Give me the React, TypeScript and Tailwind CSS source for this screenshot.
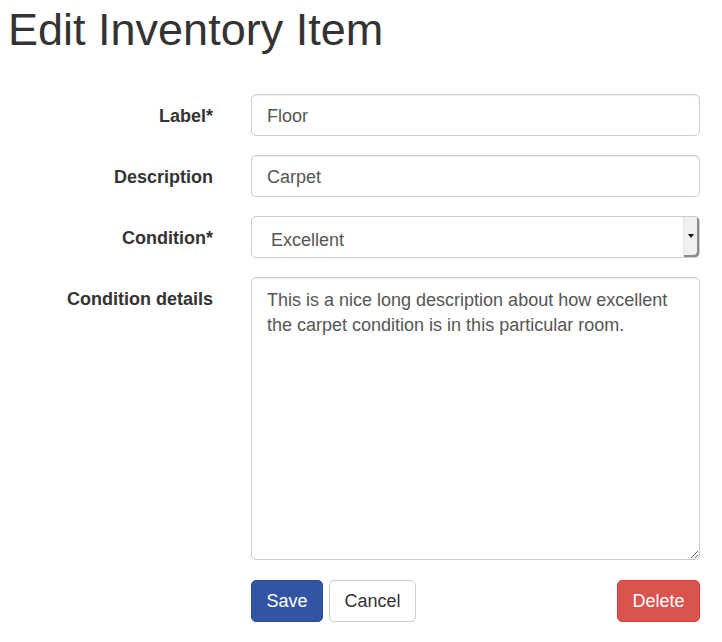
import React from 'react';

const fieldClass =
  'h-[42px] w-full rounded-[5px] border border-[#ccc] bg-white px-[15px] pt-[3px] text-[18px] text-[#555] outline-none shadow-[inset_0_1px_1px_rgba(0,0,0,0.075)]';

const FormRow: React.FC<{ label: string; children: React.ReactNode }> = ({ label, children }) => (
  <div className="flex">
    <label className="w-[213px] shrink-0 pt-[10px] text-right font-bold">{label}</label>
    <div className="ml-[38px] w-[449px]">{children}</div>
  </div>
);

const App: React.FC = () => {
  return (
    <div className="min-h-screen bg-white text-[18px] leading-[25px] text-[#333] font-['Liberation_Sans',Arial,sans-serif]">
      {/* Page title */}
      <h1 className="pl-[8px] pt-[5px] text-[45px] font-normal leading-[49.5px]">Edit Inventory Item</h1>

      {/* Form */}
      <form className="mt-[39.5px] flex flex-col gap-[19px]">
        <FormRow label="Label*">
          <input className={fieldClass} defaultValue="Floor" />
        </FormRow>

        <FormRow label="Description">
          <input className={fieldClass} defaultValue="Carpet" />
        </FormRow>

        <FormRow label="Condition*">
          <div className="flex h-[42px] w-full rounded-[5px] border border-[#ccc] bg-white">
            <span className="flex flex-1 items-center pl-[19px] pt-[7px] text-[#555]">Excellent</span>
            <div className="flex w-[16px] items-center justify-center self-stretch rounded-r-[4px] border-l border-[#e2e2e2] bg-[#eef0f2] shadow-[inset_-2px_-2px_0_#8c8c8c]">
              <span className="mb-[2px] mr-[2px] h-0 w-0 border-x-[3.5px] border-t-[4px] border-x-transparent border-t-[#111]" />
            </div>
          </div>
        </FormRow>

        <FormRow label="Condition details">
          <textarea
            className="block h-[283px] w-full rounded-[5px] border border-[#ccc] bg-white px-[15px] pb-[7.5px] pt-[9.5px] text-[18px] leading-[25px] text-[#555] outline-none shadow-[inset_0_1px_1px_rgba(0,0,0,0.075)]"
            defaultValue="This is a nice long description about how excellent the carpet condition is in this particular room."
          />
        </FormRow>

        {/* Actions */}
        <div className="mt-[1px] flex">
          <div className="ml-[251px] flex w-[449px] items-center">
            <button type="button" className="h-[42px] w-[72px] rounded-[5px] border border-[#2d4d96] bg-[#3254a4] pt-[1px] text-white">
              Save
            </button>
            <button type="button" className="ml-[6px] h-[42px] w-[87px] rounded-[5px] border border-[#ccc] bg-white pt-[1px] text-[#333]">
              Cancel
            </button>
            <button type="button" className="ml-auto h-[42px] w-[83px] rounded-[5px] border border-[#d43f3a] bg-[#d9534f] pt-[1px] text-white">
              Delete
            </button>
          </div>
        </div>
      </form>
    </div>
  );
};

export default App;
